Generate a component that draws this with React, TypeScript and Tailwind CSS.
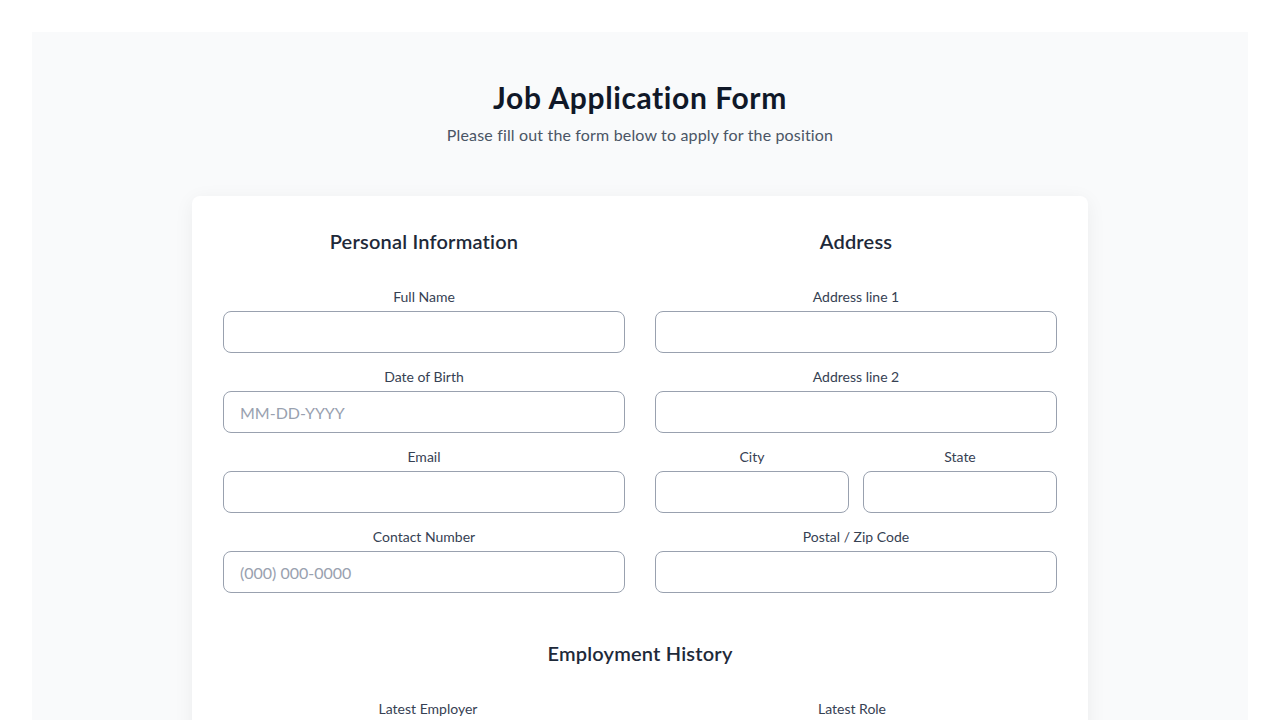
import React from "react";

const font = { fontFamily: "Lato, 'Noto Sans', sans-serif" };

function Field({ label, placeholder }: { label: string; placeholder?: string }) {
  return (
    <div className="flex flex-col">
      <label className="mb-1 block text-center text-sm leading-5 text-gray-700">{label}</label>
      <input
        type="text"
        placeholder={placeholder}
        className="h-[42px] w-full rounded-lg border border-gray-400 bg-white px-4 text-base text-gray-900 placeholder:text-gray-400 outline-none"
      />
    </div>
  );
}

export default function App() {
  return (
    <div className="min-h-screen bg-white p-8" style={font}>
      <div className="bg-gray-50 px-8 pb-12 pt-[47px]">
        <h1 className="text-center text-3xl font-bold leading-9 tracking-[0.02em] text-gray-900">Job Application Form</h1>
        <p className="mt-2 text-center text-base leading-6 tracking-[0.01em] text-gray-600">
          Please fill out the form below to apply for the position
        </p>
        <div className="mx-auto mt-[49px] max-w-4xl rounded-lg bg-white p-[31px] shadow-[0_4px_20px_rgba(0,0,0,0.06)]">
          <div className="grid grid-cols-2 gap-[30px]">
            <div>
              <h2 className="mb-8 text-center text-xl font-semibold leading-7 tracking-[0.01em] text-gray-800">Personal Information</h2>
              <div className="flex flex-col gap-[14px]">
                <Field label="Full Name" />
                <Field label="Date of Birth" placeholder="MM-DD-YYYY" />
                <Field label="Email" />
                <Field label="Contact Number" placeholder="(000) 000-0000" />
              </div>
            </div>
            <div>
              <h2 className="mb-8 text-center text-xl font-semibold leading-7 tracking-[0.01em] text-gray-800">Address</h2>
              <div className="flex flex-col gap-[14px]">
                <Field label="Address line 1" />
                <Field label="Address line 2" />
                <div className="grid grid-cols-2 gap-[14px]">
                  <Field label="City" />
                  <Field label="State" />
                </div>
                <Field label="Postal / Zip Code" />
              </div>
            </div>
          </div>
          <div className="mt-[46px]">
            <h2 className="mb-8 text-center text-xl font-semibold leading-7 tracking-[0.01em] text-gray-800">Employment History</h2>
            <div className="grid grid-cols-2 gap-[14px]">
              <Field label="Latest Employer" />
              <Field label="Latest Role" />
            </div>
          </div>
        </div>
      </div>
    </div>
  );
}
